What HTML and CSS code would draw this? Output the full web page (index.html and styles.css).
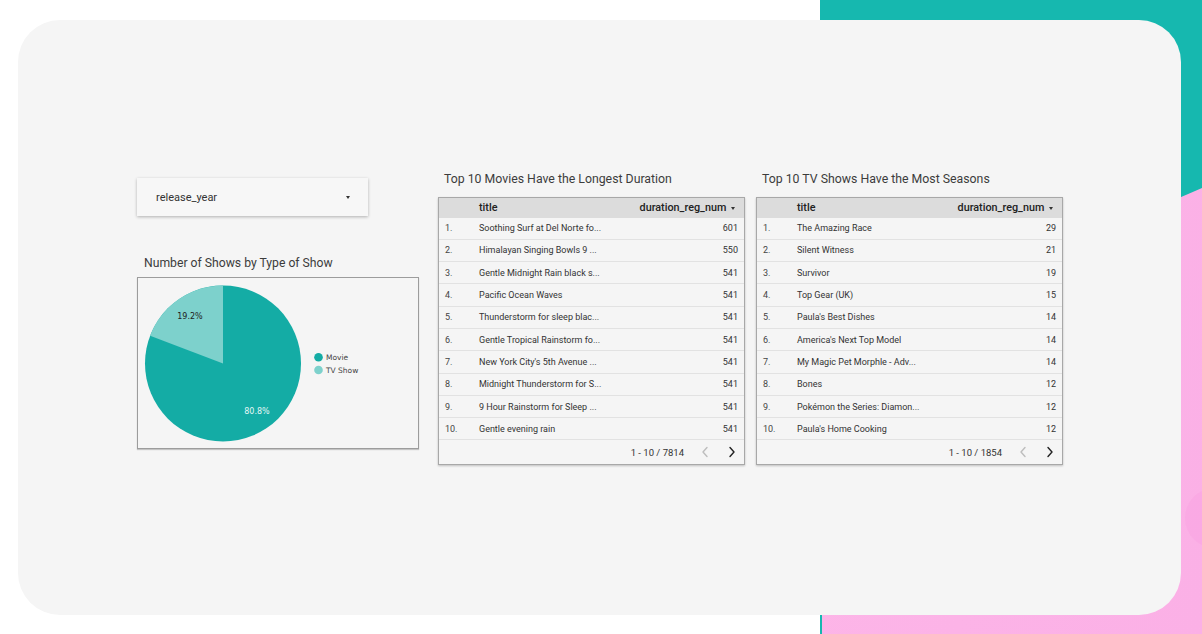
FILE: index.html
```html
<!DOCTYPE html>
<html>
<head>
<meta charset="utf-8">
<link rel="stylesheet" href="styles.css">
</head>
<body>
<div class="backdrop">
  <div class="pink"></div>
  <div class="blob"></div>
</div>
<div class="card">
  <div class="dash">
    <div class="left-col">
      <div class="dropdown"><span>release_year</span><span class="caret"></span></div>
      <div class="chart-title">Number of Shows by Type of Show</div>
      <div class="chart-box">
        <svg width="280" height="170" viewBox="0 0 280 170">
          <circle cx="85" cy="85.5" r="78" fill="#14aca5"/>
          <path d="M85 85.5 L85 7.5 A78 78 0 0 0 12.1 57.7 Z" fill="#7dd1cc"/>
          <text x="52" y="41" class="lbl dark" text-anchor="middle">19.2%</text>
          <text x="119" y="136" class="lbl light" text-anchor="middle">80.8%</text>
          <circle cx="180.5" cy="79.3" r="4.3" fill="#14aca5"/>
          <text x="188" y="82.3" class="leg">Movie</text>
          <circle cx="180.5" cy="92" r="4.3" fill="#7dd1cc"/>
          <text x="188" y="95" class="leg">TV Show</text>
        </svg>
      </div>
    </div>
    <div class="table-col">
      <div class="table-title">Top 10 Movies Have the Longest Duration</div>
      <div class="table">
        <div class="thead"><span class="c-num"></span><span class="c-title">title</span><span class="c-val">duration_reg_num <span class="caret"></span></span></div>
        <div class="row"><span class="c-num">1.</span><span class="c-title">Soothing Surf at Del Norte fo...</span><span class="c-val">601</span></div>
        <div class="row"><span class="c-num">2.</span><span class="c-title">Himalayan Singing Bowls 9 ...</span><span class="c-val">550</span></div>
        <div class="row"><span class="c-num">3.</span><span class="c-title">Gentle Midnight Rain black s...</span><span class="c-val">541</span></div>
        <div class="row"><span class="c-num">4.</span><span class="c-title">Pacific Ocean Waves</span><span class="c-val">541</span></div>
        <div class="row"><span class="c-num">5.</span><span class="c-title">Thunderstorm for sleep blac...</span><span class="c-val">541</span></div>
        <div class="row"><span class="c-num">6.</span><span class="c-title">Gentle Tropical Rainstorm fo...</span><span class="c-val">541</span></div>
        <div class="row"><span class="c-num">7.</span><span class="c-title">New York City's 5th Avenue ...</span><span class="c-val">541</span></div>
        <div class="row"><span class="c-num">8.</span><span class="c-title">Midnight Thunderstorm for S...</span><span class="c-val">541</span></div>
        <div class="row"><span class="c-num">9.</span><span class="c-title">9 Hour Rainstorm for Sleep ...</span><span class="c-val">541</span></div>
        <div class="row"><span class="c-num">10.</span><span class="c-title">Gentle evening rain</span><span class="c-val">541</span></div>
        <div class="pager"><span class="count">1 - 10 / 7814</span>
          <svg class="chev prev" width="8" height="12" viewBox="0 0 8 12"><polyline points="6,1.5 2,6 6,10.5"/></svg>
          <svg class="chev next" width="8" height="12" viewBox="0 0 8 12"><polyline points="2,1.5 6,6 2,10.5"/></svg>
        </div>
      </div>
    </div>
    <div class="table-col">
      <div class="table-title">Top 10 TV Shows Have the Most Seasons</div>
      <div class="table">
        <div class="thead"><span class="c-num"></span><span class="c-title">title</span><span class="c-val">duration_reg_num <span class="caret"></span></span></div>
        <div class="row"><span class="c-num">1.</span><span class="c-title">The Amazing Race</span><span class="c-val">29</span></div>
        <div class="row"><span class="c-num">2.</span><span class="c-title">Silent Witness</span><span class="c-val">21</span></div>
        <div class="row"><span class="c-num">3.</span><span class="c-title">Survivor</span><span class="c-val">19</span></div>
        <div class="row"><span class="c-num">4.</span><span class="c-title">Top Gear (UK)</span><span class="c-val">15</span></div>
        <div class="row"><span class="c-num">5.</span><span class="c-title">Paula's Best Dishes</span><span class="c-val">14</span></div>
        <div class="row"><span class="c-num">6.</span><span class="c-title">America's Next Top Model</span><span class="c-val">14</span></div>
        <div class="row"><span class="c-num">7.</span><span class="c-title">My Magic Pet Morphle - Adv...</span><span class="c-val">14</span></div>
        <div class="row"><span class="c-num">8.</span><span class="c-title">Bones</span><span class="c-val">12</span></div>
        <div class="row"><span class="c-num">9.</span><span class="c-title">Pokémon the Series: Diamon...</span><span class="c-val">12</span></div>
        <div class="row"><span class="c-num">10.</span><span class="c-title">Paula's Home Cooking</span><span class="c-val">12</span></div>
        <div class="pager"><span class="count">1 - 10 / 1854</span>
          <svg class="chev prev" width="8" height="12" viewBox="0 0 8 12"><polyline points="6,1.5 2,6 6,10.5"/></svg>
          <svg class="chev next" width="8" height="12" viewBox="0 0 8 12"><polyline points="2,1.5 6,6 2,10.5"/></svg>
        </div>
      </div>
    </div>
  </div>
</div>
</body>
</html>
```

FILE: styles.css
```css
html, body {
  margin: 0;
  padding: 0;
}
body {
  width: 1202px;
  height: 634px;
  overflow: hidden;
  background: #ffffff;
  position: relative;
  font-family: Roboto, "Liberation Sans", Arial, sans-serif;
  color: #333;
}
.backdrop {
  position: absolute;
  left: 820px;
  top: 0;
  right: 0;
  bottom: 0;
  background: #16b8af;
}
.pink {
  position: absolute;
  inset: 0;
  background: linear-gradient(100deg, #fdb6e8, #fbb0e6);
  clip-path: polygon(2px 352px, 100% 188px, 100% 100%, 2px 100%);
}
.blob {
  position: absolute;
  left: 365px;
  top: 488px;
  width: 60px;
  height: 60px;
  border-radius: 50%;
  background: #fa9fdf;
  opacity: 0.35;
}
.card {
  position: relative;
  margin: 20px 21px 0 18px;
  height: 595px;
  border-radius: 42px;
  background: #f5f5f5;
  box-sizing: border-box;
  padding: 151px 0 0 119px;
}
.dash {
  display: flex;
  align-items: flex-start;
}
.left-col {
  width: 282px;
  margin-top: 7px;
  margin-right: 19px;
}
.dropdown {
  width: 231px;
  height: 38px;
  box-sizing: border-box;
  background: #f7f7f7;
  box-shadow: 0 1px 3px rgba(0,0,0,0.28);
  display: flex;
  align-items: center;
  justify-content: space-between;
  padding: 0 18px 0 19px;
  font-size: 11px;
  color: #333;
}
.caret {
  display: inline-block;
  width: 0;
  height: 0;
  border-left: 2.5px solid transparent;
  border-right: 2.5px solid transparent;
  border-top: 3px solid #333;
  vertical-align: middle;
}
.chart-title {
  margin-top: 39px;
  padding-left: 7px;
  font-size: 12.2px;
  line-height: 16px;
  color: #3c3c3c;
  margin-bottom: 6px;
}
.chart-box {
  width: 282px;
  height: 172px;
  box-sizing: border-box;
  border: 1px solid #9c9c9c;
  box-shadow: 0 1px 1px rgba(0,0,0,0.2);
  background: #f5f5f5;
}
.chart-box svg {
  display: block;
}
.lbl {
  font-size: 8px;
  font-family: "DejaVu Sans", sans-serif;
}
.lbl.dark { fill: #222; }
.lbl.light { fill: #e6f7f6; }
.leg {
  font-size: 7.5px;
  font-family: "DejaVu Sans", sans-serif;
  fill: #444;
}
.table-col {
  width: 307px;
  margin-right: 11px;
}
.table-title {
  padding-left: 6px;
  font-size: 12.3px;
  line-height: 16px;
  margin-bottom: 10px;
  color: #3c3c3c;
}
.table {
  width: 307px;
  box-sizing: border-box;
  border: 1px solid #a8a8a8;
  box-shadow: 0 1px 2px rgba(0,0,0,0.22);
  background: #f5f5f5;
  font-size: 9px;
  color: #333;
}
.thead, .row {
  display: flex;
  align-items: center;
}
.thead {
  height: 19.5px;
  background: #dcdcdc;
  font-size: 10.8px;
  font-weight: 500;
  color: #222;
}
.row {
  height: 22.3px;
  box-sizing: border-box;
  border-bottom: 1px solid #e2e2e2;
}
.c-num {
  width: 40px;
  padding-left: 6px;
  box-sizing: border-box;
  color: #444;
}
.c-title {
  flex: 1;
  white-space: nowrap;
}
.c-val {
  padding-right: 6px;
  text-align: right;
}
.thead .c-val {
  padding-right: 9px;
}
.thead .caret {
  margin-left: 2px;
  border-top-color: #333;
}
.pager {
  height: 24px;
  display: flex;
  align-items: center;
  justify-content: flex-end;
  padding-right: 8px;
  font-size: 9.5px;
  color: #333;
}
.chev {
  display: block;
  fill: none;
  stroke-width: 1.4;
  stroke-linecap: round;
  stroke-linejoin: round;
}
.chev.prev { stroke: #bdbdbd; margin-left: 17px; }
.chev.next { stroke: #222; margin-left: 19px; }
```
